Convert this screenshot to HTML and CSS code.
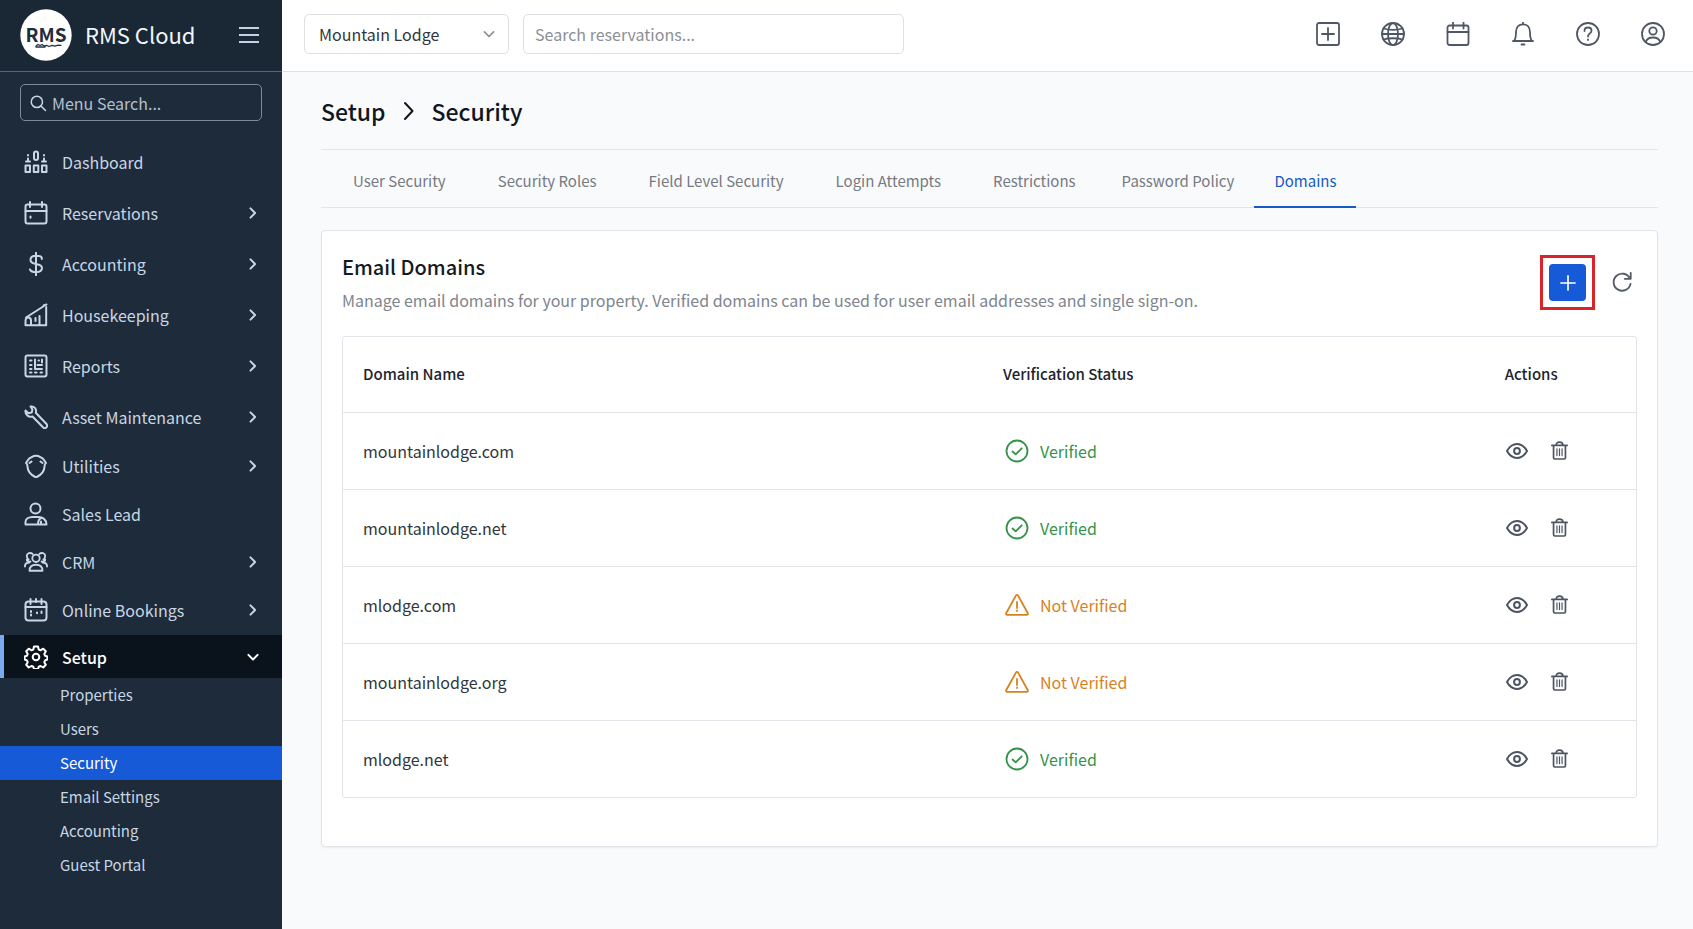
FILE: index.html
```html
<!DOCTYPE html>
<html lang="en">
<head>
<meta charset="utf-8">
<meta name="viewport" content="width=device-width, initial-scale=1">
<title>RMS Cloud - Security</title>
<link rel="stylesheet" href="styles.css">
</head>
<body>
<svg class="sprite" aria-hidden="true">
  <symbol id="i-right" viewBox="0 0 24 24"><path d="M9 6.500l5.500 5.500L9 17.500"/></symbol>
  <symbol id="i-crumb" viewBox="0 0 24 24"><path d="M8 4l7.500 8L8 20"/></symbol>
  <symbol id="i-down" viewBox="0 0 24 24"><path d="M6.500 9.500L12 15l5.500-5.500"/></symbol>
  <symbol id="i-search" viewBox="0 0 24 24"><circle cx="10.500" cy="10.500" r="7.500"/><path d="M16 16l6 6"/></symbol>
  <symbol id="i-dashboard" viewBox="0 0 24 24"><rect x="1.500" y="15.500" width="4.500" height="6.500"/><rect x="9.800" y="15.500" width="4.500" height="6.500"/><rect x="18" y="15.500" width="4.500" height="6.500"/><rect x="10" y="1.500" width="4" height="8.500" rx="2"/><path d="M2 11.500h4M18 11.500h4M4 8.500v3M20 8.500v3M4 5v.5M20 5v.5"/></symbol>
  <symbol id="i-reservations" viewBox="0 0 24 24"><rect x="1.500" y="3.500" width="21" height="19" rx="2"/><path d="M1.500 10h21M6 1v5M18 1v5M6.500 15.500v1.200"/></symbol>
  <symbol id="i-dollar" viewBox="0 0 24 24"><path d="M12 .8v22.400M17.800 7V5.700c-.8-1.400-2.600-1.900-5.800-1.900-3.500 0-5.500 1.300-5.500 3.900 0 2.800 2.200 3.700 5.500 4.200 3.800.6 6 1.500 6 4.200 0 2.600-2.200 4.100-6 4.100-3.300 0-5.200-.8-6-2.700"/></symbol>
  <symbol id="i-housekeeping" viewBox="0 0 24 24"><path d="M1.500 22.200h20.700V4M2 14.500L20 3M1.500 22v-3.500M1.500 18.500c0-2.500 1-4 2.500-4s3 1 3 3v4M11.500 15v3M15.500 13v8.500M19.500 2.500l3-1"/></symbol>
  <symbol id="i-reports" viewBox="0 0 24 24"><rect x="1.500" y="1.500" width="21" height="21" rx="2"/><path d="M6 6.500h1.500M6 11h1.500M6 15h1.500M6 18.500h1.500M11 5.500v9.500M14.500 6.500h.5M18 5.500v3M13.500 11h4.500M12 15h6M11 18.500h1.500M16.500 18.500h1.500"/></symbol>
  <symbol id="i-wrench" viewBox="0 0 24 24"><path d="M6.500 1.500C10 .8 13 4 11.800 7.700L22.500 19c1 1.200.8 2.700-.2 3.500-1 .9-2.400.8-3.300-.2L8.500 11.500C4.500 12.600 1 9.500 1.500 5.500l3 2.700 3.200-.7.700-3z"/></symbol>
  <symbol id="i-utilities" viewBox="0 0 24 24"><path d="M4 6c1-2 2.500-2.500 4-3 2-1.600 6-1.600 8 0 1.500.5 3 1 4 3l2 3c-1.500 1-1.500 1.500-1.500 3.500 0 5-3.500 8.500-8.500 11-5-2.500-8.500-6-8.500-11C3.500 10.500 3.500 10 2 9zM7.500 7.500L5.500 9M16.500 7.500l2 1.500"/></symbol>
  <symbol id="i-person" viewBox="0 0 24 24"><circle cx="11.500" cy="6.500" r="5"/><path d="M14 22.500H1.500V20c0-3 3-5 7-5h6c4 0 8 2.500 8 7.500h-8.500c0-3.500 1-5.500 3-6.500M17 19.500v3"/></symbol>
  <symbol id="i-people" viewBox="0 0 26 24"><circle cx="13" cy="8" r="4"/><path d="M6 21.500c0-4.500 2-6.500 7-6.500s7 2 7 6.500zM9.500 3.500C7 1 3 2.500 3 5.500c0 2 .8 3 2 4M3 9.500c0 2 2 2.500 4 2M1 17c0-3 1.500-4.500 5-4.500M16.500 3.500C19 1 23 2.500 23 5.500c0 2-.8 3-2 4M23 9.500c0 2-2 2.500-4 2M25 17c0-3-1.500-4.500-5-4.500"/></symbol>
  <symbol id="i-bookings" viewBox="0 0 24 24"><rect x="1.500" y="3.500" width="21" height="19" rx="3"/><path d="M1.500 9h21M6.500 1v5M12 1v3M17.500 1v5M7 13v1M7 16.500v1M13 14.500v.8M17.500 13.500v1.500"/></symbol>
  <symbol id="i-gear" viewBox="0 0 24 24"><path d="M10 1.500h4l.7 3 1.800.8 2.700-1.600 2.600 2.600-1.500 2.700.8 1.800 2.200.7v3l-2.200.9-.8 1.800 1.500 2.600-2.600 2.700-2.700-1.500-1.800.7-.7 2.300h-4l-.7-2.300-1.800-.7-2.700 1.500-2.600-2.700 1.500-2.600-.8-1.800-2.200-.9v-3l2.200-.7.800-1.800-1.500-2.700 2.600-2.600 2.700 1.600 1.800-.8z"/><circle cx="12" cy="12" r="3.300"/></symbol>
  <symbol id="i-plusbox" viewBox="0 0 24 24"><rect x="1" y="1" width="22" height="22" rx="2"/><path d="M12 6v12M6 12h12"/></symbol>
  <symbol id="i-globe" viewBox="0 0 24 24"><circle cx="12" cy="12" r="11"/><ellipse cx="12" cy="12" rx="5" ry="11"/><path d="M2.500 6.500c5 1.700 14 1.700 19 0M2.500 17.500c5-1.700 14-1.700 19 0M1 12h22"/></symbol>
  <symbol id="i-calendar" viewBox="0 0 24 24"><rect x="1.500" y="3.500" width="21" height="19.500" rx="2"/><path d="M1.500 10h21M7 .5v6M17.500 .5v6"/></symbol>
  <symbol id="i-bell" viewBox="0 0 24 24"><path d="M12 .5v1.700M2 19h20M3 19c1.700-1.700 2-3.500 2-9 0-4.700 2.700-7.700 7-7.700s7 3 7 7.700c0 5.500.3 7.300 2 9M10.500 22.500h3"/></symbol>
  <symbol id="i-help" viewBox="0 0 24 24"><circle cx="12" cy="12" r="11"/><path d="M8.500 9c0-2.200 1.500-3.500 3.500-3.500s3.500 1.200 3.500 3.200c0 2.600-3.500 2.900-3.500 5.800M12 17.500v.5"/></symbol>
  <symbol id="i-account" viewBox="0 0 24 24"><circle cx="12" cy="12" r="11"/><circle cx="12" cy="9" r="3.700"/><path d="M4.700 20c1-3 3.800-4.500 7.300-4.500s6.300 1.500 7.300 4.500"/></symbol>
  <symbol id="i-check" viewBox="0 0 24 24"><circle cx="12" cy="12" r="10.500"/><path d="M7.500 12.500l3.200 2.800 6-6"/></symbol>
  <symbol id="i-warning" viewBox="0 0 24 24"><path d="M10.900 2.600L1.300 20c-.5 1-.1 1.800 1 1.800h19.400c1.100 0 1.500-.8 1-1.800L13.100 2.600c-.6-1-1.600-1-2.200 0zM12 9v6M12 17.500v.5"/></symbol>
  <symbol id="i-eye" viewBox="0 0 24 24"><path d="M2 12c2.500-4.500 6-7 10-7s7.500 2.500 10 7c-2.500 4.500-6 7-10 7S4.500 16.500 2 12z"/><circle cx="12" cy="12" r="2.900"/></symbol>
  <symbol id="i-trash" viewBox="0 0 20 22"><path d="M1 5h18M3 5v14.500c0 .9.600 1.500 1.500 1.500h11c.9 0 1.500-.6 1.500-1.500V5M6 5c0-2.500 1.200-3.800 4-3.800S14 2.500 14 5"/><path d="M7 9v8M10 9v8M13 9v8" stroke-width="1.400"/></symbol>
  <symbol id="i-refresh" viewBox="0 0 24 24"><path d="M20.500 8A9.300 9.300 0 1 0 21.300 14M21.500 2v6.500H15"/></symbol>
  <symbol id="i-plus" viewBox="0 0 24 24"><path d="M12 3.500v17M3.500 12h17"/></symbol>
</svg>

<div class="app">
  <aside class="sidebar">
    <div class="brand">
      <svg class="logo" viewBox="0 0 52 52" role="img" aria-label="RMS logo">
        <circle cx="26" cy="26" r="25.700" fill="#fff"/>
        <text x="26" y="33" text-anchor="middle" class="logo-text">RMS</text>
        <path d="M16 37l2-1.500 2 1 2-1 2 1.500 3-.5 2 1 3-1.200 3 .8 3-1 3 .2" fill="none" stroke="#26323f" stroke-width="1.300"/>
        <path d="M16 38h9" stroke="#26323f" stroke-width="1.500"/>
      </svg>
      <span class="brand-name">RMS Cloud</span>
      <button class="menu-toggle" aria-label="Toggle menu"><span></span><span></span><span></span></button>
    </div>
    <label class="menu-search">
      <svg class="icon"><use href="#i-search"/></svg>
      <input type="search" placeholder="Menu Search..." aria-label="Menu search">
    </label>
    <nav class="menu" aria-label="Main">
      <a class="item roomy" href="#"><svg class="icon"><use href="#i-dashboard"/></svg><span>Dashboard</span></a>
      <button class="item roomy"><svg class="icon"><use href="#i-reservations"/></svg><span>Reservations</span><svg class="chevron"><use href="#i-right"/></svg></button>
      <button class="item roomy"><svg class="icon"><use href="#i-dollar"/></svg><span>Accounting</span><svg class="chevron"><use href="#i-right"/></svg></button>
      <button class="item roomy"><svg class="icon"><use href="#i-housekeeping"/></svg><span>Housekeeping</span><svg class="chevron"><use href="#i-right"/></svg></button>
      <button class="item roomy"><svg class="icon"><use href="#i-reports"/></svg><span>Reports</span><svg class="chevron"><use href="#i-right"/></svg></button>
      <button class="item roomy"><svg class="icon"><use href="#i-wrench"/></svg><span>Asset Maintenance</span><svg class="chevron"><use href="#i-right"/></svg></button>
      <button class="item"><svg class="icon"><use href="#i-utilities"/></svg><span>Utilities</span><svg class="chevron"><use href="#i-right"/></svg></button>
      <a class="item" href="#"><svg class="icon"><use href="#i-person"/></svg><span>Sales Lead</span></a>
      <button class="item"><svg class="icon"><use href="#i-people"/></svg><span>CRM</span><svg class="chevron"><use href="#i-right"/></svg></button>
      <button class="item"><svg class="icon"><use href="#i-bookings"/></svg><span>Online Bookings</span><svg class="chevron"><use href="#i-right"/></svg></button>
      <button class="item open" aria-expanded="true"><svg class="icon"><use href="#i-gear"/></svg><span>Setup</span><svg class="chevron"><use href="#i-down"/></svg></button>
      <div class="submenu">
        <a href="#">Properties</a>
        <a href="#">Users</a>
        <a href="#" class="current" aria-current="page">Security</a>
        <a href="#">Email Settings</a>
        <a href="#">Accounting</a>
        <a href="#">Guest Portal</a>
      </div>
    </nav>
  </aside>

  <div class="workspace">
    <header class="topbar">
      <div class="property">
        <select aria-label="Property"><option>Mountain Lodge</option></select>
        <svg class="property-arrow"><use href="#i-down"/></svg>
      </div>
      <input class="search" type="search" placeholder="Search reservations..." aria-label="Search reservations">
      <div class="tools">
        <button aria-label="Add"><svg><use href="#i-plusbox"/></svg></button>
        <button aria-label="Language"><svg><use href="#i-globe"/></svg></button>
        <button aria-label="Calendar"><svg><use href="#i-calendar"/></svg></button>
        <button aria-label="Notifications"><svg><use href="#i-bell"/></svg></button>
        <button aria-label="Help"><svg><use href="#i-help"/></svg></button>
        <button aria-label="Account"><svg><use href="#i-account"/></svg></button>
      </div>
    </header>

    <main class="content">
      <h1 class="crumbs"><span>Setup</span><svg><use href="#i-crumb"/></svg><span>Security</span></h1>
      <nav class="tabs" aria-label="Security sections">
        <a href="#">User Security</a>
        <a href="#">Security Roles</a>
        <a href="#">Field Level Security</a>
        <a href="#">Login Attempts</a>
        <a href="#">Restrictions</a>
        <a href="#" class="compact">Password Policy</a>
        <a href="#" class="compact selected" aria-current="page">Domains</a>
      </nav>
      <section class="card">
        <div class="card-head">
          <div>
            <h2>Email Domains</h2>
            <p>Manage email domains for your property. Verified domains can be used for user email addresses and single sign-on.</p>
          </div>
          <div class="card-actions">
            <div class="highlight"><button class="add" aria-label="Add domain"><svg><use href="#i-plus"/></svg></button></div>
            <button class="refresh" aria-label="Refresh"><svg><use href="#i-refresh"/></svg></button>
          </div>
        </div>
        <div class="table-frame">
          <table>
            <colgroup><col class="col-name"><col class="col-status"><col></colgroup>
            <thead><tr><th scope="col">Domain Name</th><th scope="col">Verification Status</th><th scope="col">Actions</th></tr></thead>
            <tbody>
              <tr><td>mountainlodge.com</td><td><span class="status ok"><svg><use href="#i-check"/></svg>Verified</span></td><td><div class="row-actions"><button aria-label="View mountainlodge.com"><svg class="eye"><use href="#i-eye"/></svg></button><button aria-label="Delete mountainlodge.com"><svg class="trash"><use href="#i-trash"/></svg></button></div></td></tr>
              <tr><td>mountainlodge.net</td><td><span class="status ok"><svg><use href="#i-check"/></svg>Verified</span></td><td><div class="row-actions"><button aria-label="View mountainlodge.net"><svg class="eye"><use href="#i-eye"/></svg></button><button aria-label="Delete mountainlodge.net"><svg class="trash"><use href="#i-trash"/></svg></button></div></td></tr>
              <tr><td>mlodge.com</td><td><span class="status warn"><svg><use href="#i-warning"/></svg>Not Verified</span></td><td><div class="row-actions"><button aria-label="View mlodge.com"><svg class="eye"><use href="#i-eye"/></svg></button><button aria-label="Delete mlodge.com"><svg class="trash"><use href="#i-trash"/></svg></button></div></td></tr>
              <tr><td>mountainlodge.org</td><td><span class="status warn"><svg><use href="#i-warning"/></svg>Not Verified</span></td><td><div class="row-actions"><button aria-label="View mountainlodge.org"><svg class="eye"><use href="#i-eye"/></svg></button><button aria-label="Delete mountainlodge.org"><svg class="trash"><use href="#i-trash"/></svg></button></div></td></tr>
              <tr><td>mlodge.net</td><td><span class="status ok"><svg><use href="#i-check"/></svg>Verified</span></td><td><div class="row-actions"><button aria-label="View mlodge.net"><svg class="eye"><use href="#i-eye"/></svg></button><button aria-label="Delete mlodge.net"><svg class="trash"><use href="#i-trash"/></svg></button></div></td></tr>
            </tbody>
          </table>
        </div>
      </section>
    </main>
  </div>
</div>
</body>
</html>
```
FILE: styles.css
```css
*, *::before, *::after { box-sizing: border-box; }

body {
  margin: 0;
  font: 400 16px/24px "Noto Sans CJK SC", "Noto Sans", sans-serif;
  color: #32363d;
  background: #f9fafb;
}

button, input, select { font: inherit; color: inherit; }
button { padding: 0; border: 0; background: none; cursor: pointer; }
a { color: inherit; text-decoration: none; }
svg { fill: none; stroke: currentColor; stroke-width: 2; stroke-linecap: round; stroke-linejoin: round; flex: none; }
.sprite { display: none; }

.app { display: flex; min-height: 100vh; }

/* Sidebar */
.sidebar {
  flex: 0 0 282px;
  background: #1d2b3a;
  color: #c9d6e5;
}

.brand {
  display: flex;
  align-items: center;
  height: 72px;
  padding: 0 23px 1px 20px;
  background: #1a2734;
  border-bottom: 1px solid #566370;
}
.logo { width: 52px; height: 52px; stroke: none; }
.logo-text { font: 700 19px "Noto Sans CJK SC", sans-serif; fill: #222d3a; }
.brand-name { margin-left: 13px; padding-bottom: 2px; font-size: 22px; color: #f2f6fb; }
.menu-toggle { display: grid; gap: 5px; width: 20px; margin-left: auto; }
.menu-toggle span { height: 2px; background: #c3d2e0; }

.menu-search {
  display: flex;
  align-items: center;
  gap: 5px;
  height: 37px;
  margin: 12px 20px 15px;
  padding: 0 8px;
  border: 1px solid #7d8a97;
  border-radius: 5px;
}
.menu-search .icon { width: 18px; height: 18px; }
.menu-search input { flex: 1; min-width: 0; padding: 0; border: 0; outline: 0; background: none; }
.menu-search input::placeholder { color: #b4c1cf; opacity: 1; }

.item {
  display: flex;
  align-items: center;
  gap: 14px;
  width: 100%;
  height: 48px;
  padding: 0 19px 0 24px;
  text-align: left;
}
.item.roomy { height: 51px; }
.item .icon { width: 24px; height: 24px; }
.item .chevron { width: 20px; height: 20px; margin-left: auto; stroke-width: 2.400; }
.item.open {
  height: 43px;
  margin-top: 1px;
  padding-left: 20px;
  border-left: 4px solid #78aaf0;
  background: #0a121c;
  color: #fff;
  font-weight: 500;
}
.submenu { font-size: 15px; }
.submenu a { display: block; padding: 5px 20px 5px 60px; }
.submenu .current { background: #165ad8; color: #fff; }

/* Top bar */
.workspace { flex: 1; min-width: 0; }
.topbar {
  display: flex;
  align-items: center;
  gap: 14px;
  height: 72px;
  padding: 0 28px 3px 22px;
  background: #fff;
  border-bottom: 1px solid #dfe2e5;
}
.property { position: relative; flex: 0 0 205px; }
.property select {
  width: 100%;
  height: 40px;
  padding: 0 36px 0 14px;
  border: 1px solid #dcdfe3;
  border-radius: 5px;
  background: #fff;
  appearance: none;
}
.property-arrow { position: absolute; right: 10px; top: 10px; width: 20px; height: 20px; color: #8a8f97; pointer-events: none; }
.search {
  flex: 0 1 381px;
  min-width: 0;
  height: 40px;
  padding: 0 11px;
  border: 1px solid #dcdfe3;
  border-radius: 5px;
  background: #fff;
}
.search::placeholder { color: #8b8f96; opacity: 1; }
.tools { display: flex; gap: 41px; margin-left: auto; color: #505764; }
.tools svg { display: block; width: 24px; height: 24px; stroke-width: 1.800; }

/* Page */
.content { padding: 0 35px 40px 39px; }
.crumbs {
  display: flex;
  align-items: center;
  gap: 11px;
  height: 78px;
  margin: 0;
  font-size: 23px;
  font-weight: 500;
  color: #10161f;
  border-bottom: 1px solid #e1e4e8;
}
.crumbs svg { width: 24px; height: 24px; }
.tabs {
  display: flex;
  height: 58px;
  padding-left: 6px;
  border-bottom: 1px solid #e1e4e8;
  font-size: 15px;
  color: #757a83;
}
.tabs a { padding: 19px 26px 0; white-space: nowrap; margin-bottom: -1px; }
.tabs .compact { padding-left: 20px; padding-right: 20px; }
.tabs .selected { color: #1659c7; border-bottom: 2px solid #1659c7; }

.card {
  margin-top: 22px;
  padding: 24px 20px 48px;
  background: #fff;
  border: 1px solid #e1e4e8;
  border-radius: 4px;
  box-shadow: 0 1px 2px rgb(20 30 50 / 6%);
}
.card-head { display: flex; justify-content: space-between; }
.card h2 { margin: 0; font-size: 20px; line-height: 24px; font-weight: 500; color: #141a23; }
.card p { margin: 9px 0 24px; color: #80858d; }
.card-actions { display: flex; align-items: flex-start; gap: 16px; padding-right: 2px; }
.highlight { padding: 6px; border: 3px solid #d9252a; }
.add { display: grid; place-items: center; width: 37px; height: 37px; border-radius: 4px; background: #165ad8; color: #fff; }
.add svg { width: 20px; height: 20px; }
.refresh { width: 24px; margin-top: 16px; color: #555c68; }
.refresh svg { display: block; width: 22px; height: 22px; }

.table-frame { border: 1px solid #e1e4e8; border-radius: 3px; }
table { width: 100%; border-collapse: collapse; table-layout: fixed; }
.col-name { width: 49.5%; }
.col-status { width: 38.8%; }
th, td { height: 77px; padding: 0 20px; text-align: left; vertical-align: middle; }
th { height: 75px; font-size: 15px; font-weight: 500; color: #1e242e; }
tbody tr { border-top: 1px solid #e1e4e8; }
.status { display: flex; align-items: center; gap: 11px; padding-left: 2px; }
.status svg { width: 24px; height: 24px; stroke-width: 1.800; }
.ok { color: #35934a; }
.warn { color: #d8821f; }
.row-actions { display: flex; align-items: center; gap: 22px; color: #4d5461; }
.row-actions button { display: grid; place-items: center; width: 22px; height: 24px; }
.eye { width: 24px; height: 24px; }
.trash { width: 17px; height: 19px; }
```
